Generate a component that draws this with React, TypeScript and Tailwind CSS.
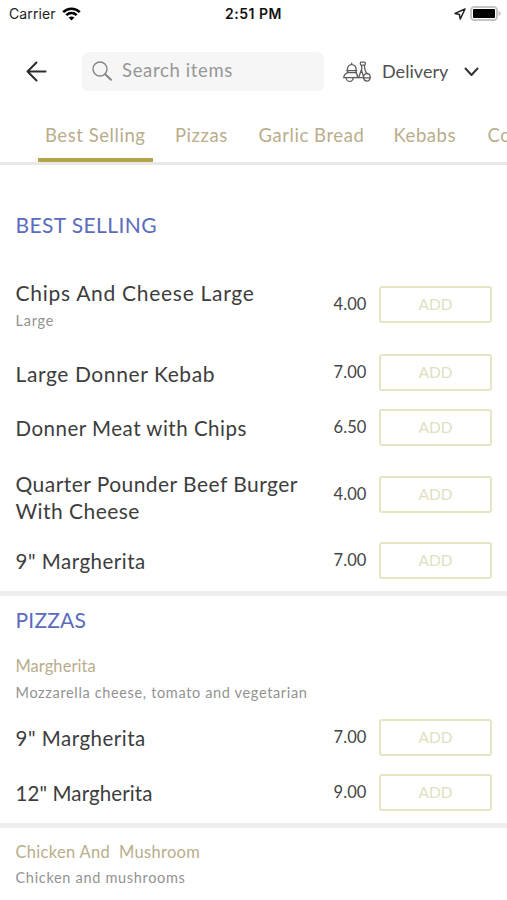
import React from "react";

type Item = { name: string; note?: string; price: string; text: string; row: string };

const bestSelling: Item[] = [
  { name: "Chips And Cheese Large", note: "Large", price: "4.00", text: "text-[21px] tracking-[0.72px]", row: "h-[81px]" },
  { name: "Large Donner Kebab", price: "7.00", text: "text-[21px] tracking-[0.6px] pt-px", row: "h-[55px]" },
  { name: "Donner Meat with Chips", price: "6.50", text: "text-[20.5px] tracking-[0.5px] pt-px", row: "h-[55px]" },
  { name: "Quarter Pounder Beef Burger With Cheese", price: "4.00", text: "text-[21px] tracking-[0.45px] pt-[5px]", row: "h-[78px]" },
  { name: '9" Margherita', price: "7.00", text: "text-[20.5px] tracking-[0.5px] pt-px", row: "h-[55px]" },
];

const margheritas: Item[] = [
  { name: '9" Margherita', price: "7.00", text: "text-[20.5px] tracking-[0.5px] pt-px", row: "h-[55px]" },
  { name: '12" Margherita', price: "9.00", text: "text-[20.5px] tracking-[0.1px] pt-px", row: "h-[55px]" },
];

function ItemRow({ item }: { item: Item }) {
  return (
    <div className={`flex items-center pl-[15.5px] pr-[15px] ${item.row}`}>
      <div className="w-[300px] shrink-0">
        <div className={`leading-[27px] text-[#3d3d3d] ${item.text}`}>{item.name}</div>
        {item.note && <div className="pt-[5px] text-[14.5px] leading-[20px] tracking-[0.75px] text-[#929292]">{item.note}</div>}
      </div>
      <div className="flex-1 pb-px pr-[12.5px] text-right text-[16.5px] leading-5 tracking-[0.1px] text-[#444]">{item.price}</div>
      <button className="h-[37px] w-[113px] rounded-[3px] border-2 border-[#e5e5c4] pb-px text-[15.5px] leading-5 text-[#e0e0c0]">
        ADD
      </button>
    </div>
  );
}

function StatusBar() {
  return (
    <div className="flex h-[27px] items-center justify-between pl-[9px] pr-[6px] font-[Inter,sans-serif]">
      <div className="flex w-[120px] items-center gap-[6px] text-[14px] tracking-[0.1px] text-[#222]">
        <span>Carrier</span>
        <svg width="19" height="14" viewBox="0 0 19 14" fill="none" stroke="#000" strokeWidth="2.5">
          <path d="M1.2 5.1C5.8.5 13.2.5 17.8 5.1" />
          <path d="M4.3 8.1c3-2.8 7.4-2.8 10.4 0" />
          <path d="M6.6 10.5c1.7-1.5 4.1-1.5 5.8 0L9.5 13.5z" fill="#000" stroke="none" />
        </svg>
      </div>
      <div className="-ml-[3px] text-[14px] font-semibold tracking-[0.5px] text-[#111]">2:51 PM</div>
      <div className="flex w-[120px] items-center justify-end gap-[4px]">
        <svg width="12" height="12" viewBox="0 0 12 12" fill="none" stroke="#222" strokeWidth="1.5" strokeLinejoin="round">
          <path d="M11 1 1 5.4l4.4 1.1L6.3 11z" />
        </svg>
        <svg width="31" height="15" viewBox="0 0 31 15">
          <rect x="1" y="1" width="26" height="13" rx="3.2" fill="#fff" stroke="#c4c4c4" strokeWidth="2" />
          <rect x="3" y="3" width="22" height="9" rx="1" fill="#000" />
          <path d="M28.6 5v5c1.2-.4 2-1.4 2-2.5s-.8-2.1-2-2.5" fill="#bbb" />
        </svg>
      </div>
    </div>
  );
}

function Scooter() {
  return (
    <svg width="28" height="22" viewBox="0 0 28 22" fill="none" stroke="#5c5c5c" strokeWidth="1.3" strokeLinecap="round" strokeLinejoin="round">
      <path d="M4.300 9.500C4.300 5.500 6 3.600 8.700 3.600s4.500 1.900 4.500 5.900M8.700 3.500V2.200" />
      <path d="M3.900 9.700h9.800M5 11.700h8.400" />
      <path d="M4.700 9.900v1.800C2.500 12.500.9 14.200.7 16.700h13.600c.5-2-.1-3.800-1.300-5V9.900" />
      <path d="M3.200 16.900a3.500 3.500 0 0 0 7 0" />
      <path d="M14.300 16.700h6.200" />
      <path d="M18 1.200h3c2 0 2 3 0 3h-3c-.9 0-.9-3 0-3zM18.500 4.300l.3 3.400-3.200 9M21.300 4.200l.7 4.600c.6 2.200 1.400 3.200 2.700 3.900M18.600 9.200c.3 2.700 1.900 4.500 1.900 7.500" />
      <path d="M20.500 16.800c0-2.500 1.500-4.100 3.500-4.100s3.300 1.600 3.300 4.100z" />
      <path d="M20.800 17a3.100 3.100 0 0 0 6.200 0" />
    </svg>
  );
}

function Header() {
  return (
    <div className="flex h-[89px] items-center">
      <svg className="ml-[26px]" width="21" height="21" viewBox="0 0 21 21" fill="none" stroke="#2c2c2c" strokeWidth="2" strokeLinecap="round" strokeLinejoin="round">
        <path d="M19.500 10.500H1.500M10.500 1.500l-9 9 9 9" />
      </svg>
      <div className="ml-[35px] flex h-[39px] w-[242px] items-center rounded-[6px] bg-[#f6f6f6] pl-[10px]">
        <svg width="21" height="21" viewBox="0 0 21 21" fill="none" stroke="#858585" strokeWidth="1.400" strokeLinecap="round">
          <circle cx="8" cy="8" r="7" />
          <path d="m13.200 13.200 5.800 5.500" strokeWidth="2" />
        </svg>
        <span className="ml-[9px] pb-px text-[18.5px] tracking-[0.65px] text-[#979797]">Search items</span>
      </div>
      <div className="ml-[19px] flex items-center">
        <Scooter />
        <span className="ml-[11px] w-[68px] whitespace-nowrap pb-px text-[18px] tracking-[0.05px] text-[#505050]">Delivery</span>
        <svg className="ml-[14px]" width="15" height="10" viewBox="0 0 15 10" fill="none" stroke="#333" strokeWidth="2" strokeLinecap="round" strokeLinejoin="round">
          <path d="m1.500 1.500 6 6.500 6-6.500" />
        </svg>
      </div>
    </div>
  );
}

function Tabs() {
  return (
    <div className="flex h-[49px] overflow-hidden whitespace-nowrap border-b-[3px] border-[#e8e8e8] text-[18.500px] leading-[38px] tracking-[0.55px] text-[#b9ad8b]">
      <div className="ml-[38px] w-[115px] shrink-0 border-b-4 border-[#b5a34a] pl-[7px]">Best Selling</div>
      <div className="ml-[22px] w-[83.5px] shrink-0">Pizzas</div>
      <div className="w-[135px] shrink-0">Garlic Bread</div>
      <div className="w-[94px] shrink-0">Kebabs</div>
      <div className="shrink-0">Combos</div>
    </div>
  );
}

export default function App() {
  return (
    <div className="h-[900px] w-[507px] overflow-hidden bg-white font-[Lato,sans-serif]">
      <StatusBar />
      <Header />
      <Tabs />
      <h2 className="h-[99px] pl-[15.5px] pt-[46px] text-[21px] leading-7 tracking-[0.4px] text-[#5b6bbd]">BEST SELLING</h2>
      {bestSelling.map((item) => (
        <ItemRow key={item.name} item={item} />
      ))}
      <div className="mt-[3px] h-[5px] bg-[#eeeeee]" />
      <h2 className="pl-[15.5px] pt-[10px] text-[21px] leading-7 tracking-[0.2px] text-[#5b6bbd]">PIZZAS</h2>
      <div className="pl-[15.5px] pt-[20px] text-[16.500px] leading-6 tracking-[0.05px] text-[#b9ad8b]">Margherita</div>
      <div className="h-[32px] pl-[15.5px] pt-[5px] text-[14.500px] leading-5 tracking-[0.65px] text-[#929292]">
        Mozzarella cheese, tomato and vegetarian
      </div>
      <div>
        {margheritas.map((item) => (
          <ItemRow key={item.name} item={item} />
        ))}
      </div>
      <div className="mt-[3px] h-[5px] bg-[#eeeeee]" />
      <div className="whitespace-pre pl-[15.5px] pt-[12px] text-[16.500px] leading-6 tracking-[0.3px] text-[#b9ad8b]">{"Chicken And  Mushroom"}</div>
      <div className="pl-[15.5px] pt-[4px] text-[14.500px] leading-5 tracking-[0.68px] text-[#929292]">Chicken and mushrooms</div>
    </div>
  );
}
